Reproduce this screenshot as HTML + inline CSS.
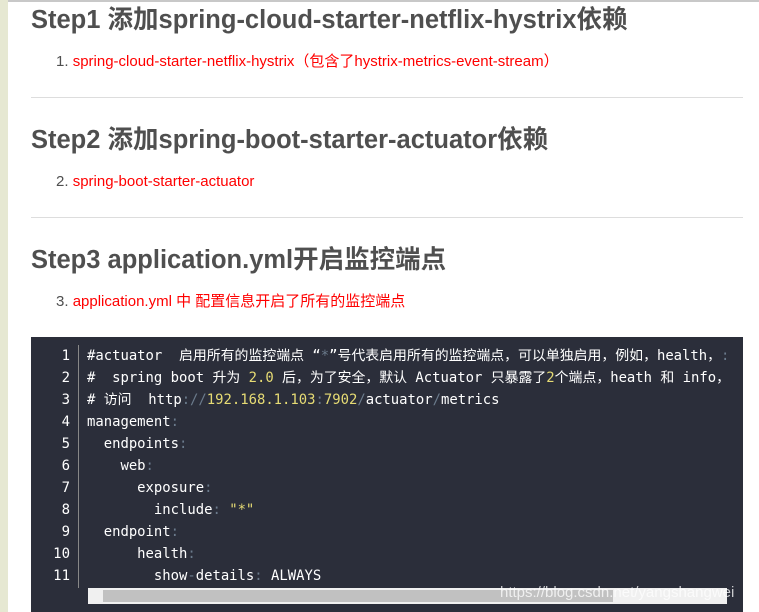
<!DOCTYPE html>
<html><head><meta charset="utf-8"><style>
body{margin:0;width:759px;height:612px;overflow:hidden;background:#fff;position:relative;font-family:"Liberation Sans","Noto Sans CJK SC",sans-serif}
.strip{position:absolute;left:0;top:0;width:8px;height:612px;background:#e6e8d2}
.top{position:absolute;left:8px;top:0;right:0;height:2px;background:#c8c8c8}
h2{position:absolute;left:31px;margin:0;font-size:25.5px;font-weight:bold;color:#4f4f4f;line-height:30px;white-space:nowrap}
.li{position:absolute;left:56px;font-size:15px;color:#4f4f4f;line-height:20px;white-space:nowrap}
.li span{color:#f00}
.hr{position:absolute;left:31px;width:712px;height:1px;background:#ddd}
.code{position:absolute;left:31px;top:337px;width:712px;height:275px;background:#2b2e3a}
.ln{position:absolute;left:0;top:8px;width:39px;text-align:right;color:#fff;font:14px/22px "DejaVu Sans Mono","Noto Sans CJK SC",monospace}
.sep{position:absolute;left:47px;top:8px;width:1px;height:243px;background:#888}
.src{position:absolute;left:56px;top:8px;color:#fff;font:13.9px/22px "DejaVu Sans Mono","Noto Sans CJK SC",monospace;white-space:pre}
.p{color:#6b7b8c}.y{color:#e6db74}
.sb{position:absolute;left:57px;top:251px;width:639px;height:16px;background:#f0f0f0}
.th{position:absolute;left:15px;top:2px;width:510px;height:12px;background:#c1c1c1}
.wm{position:absolute;left:500px;top:584px;font-size:15px;color:rgba(255,255,255,.75);white-space:nowrap}
</style></head><body>
<div class="strip"></div><div class="top"></div>
<h2 style="top:5px">Step1 添加spring-cloud-starter-netflix-hystrix依赖</h2>
<div class="li" style="top:52px">1. <span>spring-cloud-starter-netflix-hystrix（包含了hystrix-metrics-event-stream）</span></div>
<div class="hr" style="top:97px"></div>
<h2 style="top:125px">Step2 添加spring-boot-starter-actuator依赖</h2>
<div class="li" style="top:172px">2. <span>spring-boot-starter-actuator</span></div>
<div class="hr" style="top:217px"></div>
<h2 style="top:245px">Step3 application.yml开启监控端点</h2>
<div class="li" style="top:292px">3. <span>application.yml 中 配置信息开启了所有的监控端点</span></div>
<div class="code">
<div class="ln">1<br>2<br>3<br>4<br>5<br>6<br>7<br>8<br>9<br>10<br>11</div>
<div class="sep"></div>
<div class="src">#actuator  启用所有的监控端点 “<span class="p">*</span>”号代表启用所有的监控端点，可以单独启用，例如，health，<span class="p">:</span>
#  spring boot 升为 <span class="y">2.0</span> 后，为了安全，默认 Actuator 只暴露了<span class="y">2</span>个端点，heath 和 info，
# 访问  http<span class="p">://</span><span class="y">192.168.1.103</span><span class="p">:</span><span class="y">7902</span><span class="p">/</span>actuator<span class="p">/</span>metrics
management<span class="p">:</span>
  endpoints<span class="p">:</span>
    web<span class="p">:</span>
      exposure<span class="p">:</span>
        include<span class="p">:</span> <span class="y">"*"</span>
  endpoint<span class="p">:</span>
      health<span class="p">:</span>
        show<span class="p">-</span>details<span class="p">:</span> ALWAYS</div>
<div class="sb"><div class="th"></div></div>
</div>
<div class="wm">https://blog.csdn.net/yangshangwei</div>
</body></html>
